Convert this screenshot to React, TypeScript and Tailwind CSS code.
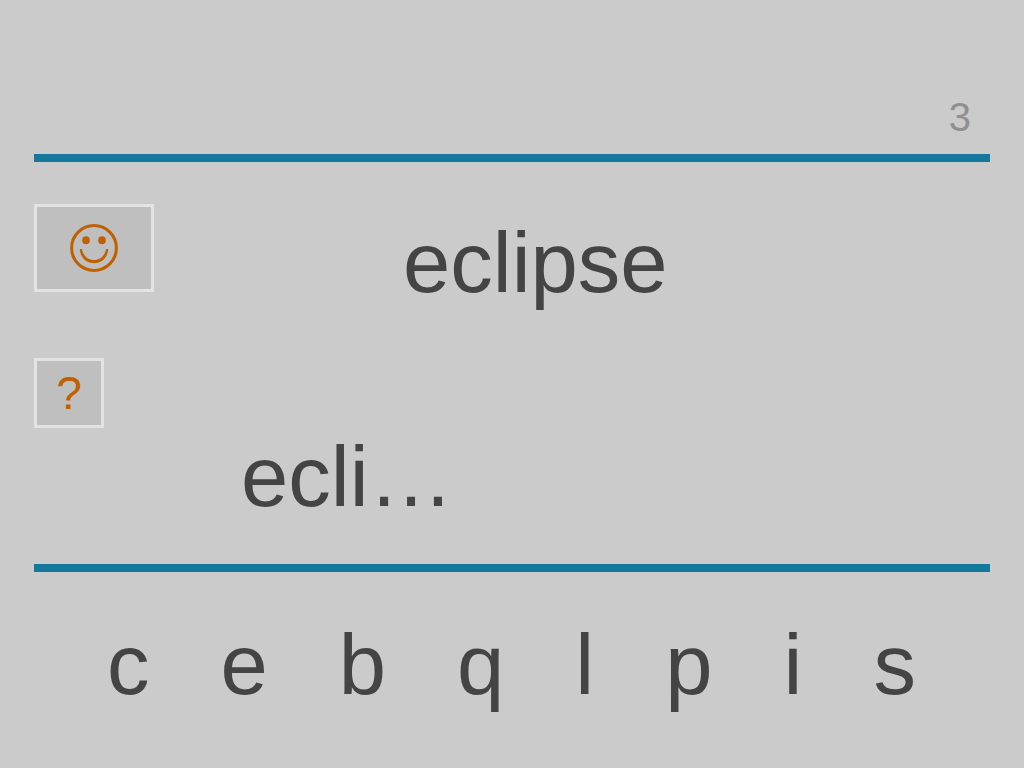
const letters = ['c', 'e', 'b', 'q', 'l', 'p', 'i', 's'];

export default function App() {
  return (
    <main className="flex min-h-screen flex-col bg-[#cbcbcb] px-[34px] font-['Liberation_Sans',Arial,sans-serif] text-[#444]">
      <header className="flex h-[162px] items-end justify-end border-b-8 border-[#13789c] pr-[19px] pb-[15px]">
        <span className="text-[40px] leading-[44px] text-[#909090]">3</span>
      </header>
      <section className="grid h-[410px] grid-cols-[120px_1fr] border-b-8 border-[#13789c]">
        <div className="flex flex-col items-start pt-[42px]">
          <button type="button" aria-label="Happy" className="flex h-[88px] w-[120px] items-center justify-center border-[3px] border-[#e3e3e3] bg-[#bfbfbf] text-[#c06000]">
            <svg viewBox="0 0 48 48" className="size-12" fill="none" stroke="currentColor" strokeWidth="3" aria-hidden="true">
              <circle cx="24" cy="24" r="22.4" />
              <ellipse cx="16" cy="16.3" rx="3.8" ry="4" fill="currentColor" stroke="none" />
              <ellipse cx="32" cy="16.3" rx="3.8" ry="4" fill="currentColor" stroke="none" />
              <path d="M9.800 25H12C13 31.500 17.500 36 24 36S35 31.500 36 25H38.200C37.700 33.500 32 39.200 24 39.200S10.300 33.500 9.800 25Z" fill="currentColor" stroke="none" />
            </svg>
          </button>
          <button type="button" className="mt-[66px] flex size-[70px] items-center justify-center border-[3px] border-[#e3e3e3] bg-[#bfbfbf] text-[46px] leading-none text-[#c06000]">?</button>
        </div>
        <div className="flex flex-col">
          <p className="mt-[49px] pl-[249px] text-[85px] leading-[104px]">eclipse</p>
          <p className="mt-[110px] pl-[87px] text-[85px] leading-[104px]">ecli…</p>
        </div>
      </section>
      <div className="flex gap-[71px] pt-[41px] pl-[73px] text-[85px] leading-[104px]">
        {letters.map((letter) => (
          <button key={letter} type="button">{letter}</button>
        ))}
      </div>
    </main>
  );
}
